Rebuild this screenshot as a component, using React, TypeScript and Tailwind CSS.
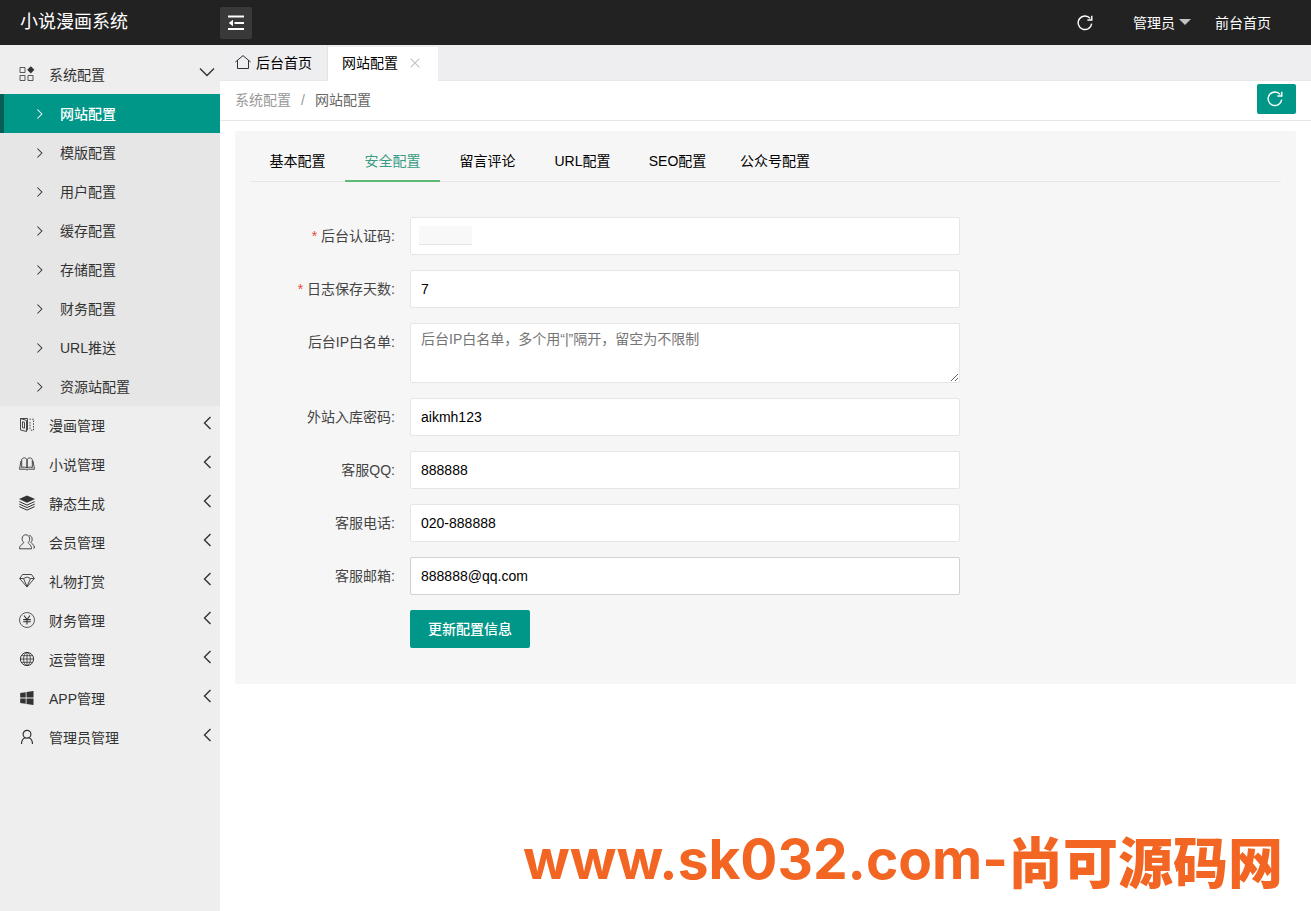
import { useState, type ReactNode } from "react";
import { clsx } from "clsx";

type IconProps = { className?: string };

function Svg({ className, children }: { className?: string; children: ReactNode }) {
  return (
    <svg
      viewBox="0 0 16 16"
      aria-hidden
      fill="none"
      stroke="currentColor"
      strokeWidth="1"
      className={clsx("shrink-0", className ?? "size-4")}
    >
      {children}
    </svg>
  );
}

function RefreshIcon({ className }: IconProps) {
  return (
    <Svg className={className}>
      <path d="M13.200 3.400A6.800 6.800 0 1 0 14.700 8.600" strokeWidth="1.400" />
      <path d="M14.800.8v4.200h-4.400" strokeWidth="1.400" />
    </Svg>
  );
}

function ShrinkIcon() {
  return (
    <Svg>
      <path d="M0 1.500h16M6.500 8H16M0 14h16" strokeWidth="1.800" />
      <path d="M5 4.800v6.400L.8 8z" fill="currentColor" stroke="none" />
    </Svg>
  );
}

function HomeIcon() {
  return (
    <Svg>
      <path d="M.4 7 8 .6 15.600 7M2.500 5.500v8h11v-8" strokeWidth=".8" />
    </Svg>
  );
}

function ChevronIcon({ className, d }: IconProps & { d: string }) {
  return (
    <Svg className={className}>
      <path d={d} strokeWidth="1.400" />
    </Svg>
  );
}

const icons = {
  component: (
    <Svg>
      <path d="M1 1.500h5v5H1zM1 9.500h5v5H1zM9 9.500h5v5H9z" strokeWidth=".8" />
      <path d="M11.800.2 15.400 3.800l-3.600 3.600-3.600-3.600z" fill="currentColor" stroke="none" />
    </Svg>
  ),
  comic: (
    <Svg>
      <path d="M1.500 1.500 7.500 3.500v11l-6-1.500zM1.500 1.500h7v11.500h-1" strokeWidth=".9" />
      <path d="M3.500 4.800l2 .6v5.800l-2-.5z" strokeWidth=".9" />
      <path d="M10.500 2.200h4v11h-4M11 5v7" strokeWidth=".9" strokeDasharray="1.500 1.200" />
    </Svg>
  ),
  book: (
    <Svg>
      <path
        d="M8 3.600v8.400C6.600 10.900 4 10.900 2.700 11.500V3.500C3.600 1.400 7 1.400 8 3.600zM8 3.600v8.400c1.400-1.100 4-1.100 5.300-.5V3.500C12.400 1.400 9 1.400 8 3.600z"
        strokeWidth=".9"
      />
      <path d="M2 5 .5 13.200h6c.5.800 2.500.8 3 0h6L14 5" strokeWidth=".9" />
    </Svg>
  ),
  layers: (
    <Svg>
      <path d="M8 .5 16 4 8 7.700 0 4z" fill="currentColor" stroke="none" />
      <path d="m.3 6.600 7.700 3.500 7.700-3.500M.3 9.100 8 12.600l7.700-3.500M.3 11.600 8 15.100l7.700-3.500" />
    </Svg>
  ),
  users: (
    <Svg>
      <path
        d="M4.800 8.500C2.300 7 2.300.8 6.800.8s4.700 6.200 2.400 7.700c.3 1.700 3.300 2 3.300 6.300H.5c0-4.300 4-4.600 4.300-6.300z"
        strokeWidth=".9"
      />
      <path d="M10.300 1.300c3.500.8 3.400 5.700 1.700 7.200.5 1.300 3.500 2 3.500 5.500h-1.200" strokeWidth=".9" />
    </Svg>
  ),
  diamond: (
    <Svg>
      <path d="M3.500 1.500h9L15.300 5.500 8 14 .7 5.500zM.7 5.500h3.800L8 4l3.500 1.500h3.800M4.500 5.500 8 13.500l3.500-8" strokeWidth=".9" />
    </Svg>
  ),
  yen: (
    <Svg>
      <circle cx="8" cy="8" r="7.500" strokeWidth=".8" />
      <path d="M5 3.500l3 4 3-4M8 7.500v5M4.200 7.600h7.600M4.200 9.800h7.600" strokeWidth="1.100" />
    </Svg>
  ),
  globe: (
    <Svg>
      <circle cx="8" cy="8" r="6.600" />
      <ellipse cx="8" cy="8" rx="3.400" ry="6.600" strokeWidth=".8" />
      <path d="M8 1.400v13.200M1.400 8h13.200M2.500 4.700h11M2.500 11.300h11" strokeWidth=".8" />
    </Svg>
  ),
  windows: (
    <Svg>
      <path
        d="M1.200 3 6.700 2.200v5.400H1.200zM7.500 2.100l7-1v6.500h-7zM1.200 8.400h5.500v5.400L1.200 13zM7.500 8.400h7v6.500l-7-1z"
        fill="currentColor"
        stroke="none"
      />
    </Svg>
  ),
  user: (
    <Svg>
      <circle cx="8" cy="5.300" r="3.900" strokeWidth="1.200" />
      <path d="M2.500 15c0-3.500 1.700-5.600 3.700-6.300M13.500 15c0-3.500-1.700-5.600-3.700-6.300" strokeWidth="1.200" />
    </Svg>
  ),
};

const subMenu = [
  "网站配置",
  "模版配置",
  "用户配置",
  "缓存配置",
  "存储配置",
  "财务配置",
  "URL推送",
  "资源站配置",
];

const menu: { label: string; icon: keyof typeof icons }[] = [
  { label: "漫画管理", icon: "comic" },
  { label: "小说管理", icon: "book" },
  { label: "静态生成", icon: "layers" },
  { label: "会员管理", icon: "users" },
  { label: "礼物打赏", icon: "diamond" },
  { label: "财务管理", icon: "yen" },
  { label: "运营管理", icon: "globe" },
  { label: "APP管理", icon: "windows" },
  { label: "管理员管理", icon: "user" },
];

const configTabs = ["基本配置", "安全配置", "留言评论", "URL配置", "SEO配置", "公众号配置"];

function Header() {
  return (
    <header className="flex h-[45px] items-center bg-[#222] text-white">
      <h1 className="w-[220px] px-5 pb-[2px] text-lg leading-6">小说漫画系统</h1>
      <button
        type="button"
        aria-label="收起菜单"
        className="flex size-8 items-center justify-center rounded-xs bg-[#393939]"
      >
        <ShrinkIcon />
      </button>
      <nav className="ml-auto flex items-center pr-10">
        <button type="button" aria-label="刷新" className="mr-10">
          <RefreshIcon />
        </button>
        <button type="button" className="mr-6 flex items-center gap-1">
          管理员
          <svg viewBox="0 0 12 6" aria-hidden className="mb-[2px] h-[6px] w-3 text-[#c2c2c2]">
            <path d="M0 0h12L6 6z" fill="currentColor" />
          </svg>
        </button>
        <a href="#home">前台首页</a>
      </nav>
    </header>
  );
}

function MenuRow({ label, icon, open }: { label: string; icon: keyof typeof icons; open?: boolean }) {
  return (
    <button type="button" className="flex h-[39px] w-full items-center pr-[5px] pl-[19px] text-left">
      <span className="pb-[2px]">{icons[icon]}</span>
      <span className="ml-[14px] grow">{label}</span>
      <span className="pb-[6px]">
        <ChevronIcon d={open ? "M1 4.500l7 7 7-7" : "M11.500 2 5.500 8l6 6"} />
      </span>
    </button>
  );
}

function Sidebar() {
  const [active, setActive] = useState("网站配置");
  return (
    <aside className="w-[220px] shrink-0 bg-[#eee] pt-[10px] text-[#333]">
      <MenuRow label="系统配置" icon="component" open />
      <ul className="bg-[#e6e6e6]">
        {subMenu.map((label) => (
          <li key={label}>
            <a
              href="#config"
              onClick={() => setActive(label)}
              className={clsx(
                "flex h-[39px] items-center gap-[14px] border-l-4 pl-[30px]",
                label === active
                  ? "border-[#075e55] bg-[#009688] font-medium text-white"
                  : "border-transparent",
              )}
            >
              <ChevronIcon className="size-3" d="M4.500 2l6 6-6 6" />
              {label}
            </a>
          </li>
        ))}
      </ul>
      {menu.map((item) => (
        <MenuRow key={item.label} {...item} />
      ))}
    </aside>
  );
}

function PageTabs() {
  return (
    <div className="flex h-9 items-end border-b border-[#e8e8ea] bg-[#eeeef0] text-black">
      <a href="#home" className="flex h-[35px] items-center gap-[5px] border-r border-[#e2e2e2] px-[15px]">
        <HomeIcon />
        后台首页
      </a>
      <div className="-mb-px flex h-[34px] items-center gap-3 bg-white pr-[18px] pb-[2px] pl-[14px]">
        <a href="#config">网站配置</a>
        <button type="button" aria-label="关闭" className="text-[#c2c2c2]">
          <Svg className="size-[10px]">
            <path d="M1 1l14 14M15 1L1 15" strokeWidth="1.800" />
          </Svg>
        </button>
      </div>
    </div>
  );
}

function Breadcrumb() {
  return (
    <div className="flex h-10 items-start border-b border-[#e6e6e6] px-[15px]">
      <nav className="flex grow leading-[38px] text-[#999]">
        <a href="#system">系统配置</a>
        <span className="w-6 text-center">/</span>
        <span className="text-[#666]">网站配置</span>
      </nav>
      <button
        type="button"
        aria-label="刷新页面"
        className="mt-[3px] flex h-[30px] w-[39px] items-center justify-center rounded-xs bg-[#009688] pr-1 text-white"
      >
        <RefreshIcon />
      </button>
    </div>
  );
}

function Field({
  id,
  label,
  required,
  children,
}: {
  id: string;
  label: string;
  required?: boolean;
  children: ReactNode;
}) {
  return (
    <div className="mb-[15px] flex">
      <label htmlFor={id} className="w-40 shrink-0 px-[15px] text-right leading-[38px] text-[#444]">
        {required && <span className="mr-1 text-[#f0463c]">*</span>}
        {label}:
      </label>
      <div className="relative flex max-w-[550px] grow">{children}</div>
    </div>
  );
}

const inputClass =
  "w-full rounded-xs border bg-white px-[10px] text-black outline-none placeholder:text-[#757575] focus:border-[#d2d2d2]";

function TextInput({ id, value, active }: { id: string; value?: string; active?: boolean }) {
  return (
    <input
      id={id}
      type="text"
      defaultValue={value}
      className={clsx(inputClass, "h-[38px]", active ? "border-[#d2d2d2]" : "border-[#e6e6e6]")}
    />
  );
}

function SecurityForm() {
  return (
    <form className="pt-[35px] pb-[21px]" onSubmit={(e) => e.preventDefault()}>
      <Field id="code" label="后台认证码" required>
        <TextInput id="code" />
        {/* masked value */}
        <span className="absolute top-[9px] left-[9px] h-[19px] w-[53px] border-b border-[#e6e6e6] bg-[#f8f8f8]" />
      </Field>
      <Field id="logDays" label="日志保存天数" required>
        <TextInput id="logDays" value="7" />
      </Field>
      <Field id="ips" label="后台IP白名单">
        <textarea
          id="ips"
          placeholder="后台IP白名单，多个用“|”隔开，留空为不限制"
          className={clsx(inputClass, "h-[60px] resize-y border-[#e6e6e6] py-[5px] leading-5")}
        />
      </Field>
      <Field id="storePass" label="外站入库密码">
        <TextInput id="storePass" value="aikmh123" />
      </Field>
      <Field id="qq" label="客服QQ">
        <TextInput id="qq" value="888888" />
      </Field>
      <Field id="tel" label="客服电话">
        <TextInput id="tel" value="020-888888" />
      </Field>
      <Field id="mail" label="客服邮箱">
        <TextInput id="mail" value="888888@qq.com" active />
      </Field>
      <button
        type="submit"
        className="ml-40 h-[38px] rounded-xs bg-[#009688] px-[18px] font-medium text-white"
      >
        更新配置信息
      </button>
    </form>
  );
}

export default function App() {
  const [tab, setTab] = useState("安全配置");
  return (
    <div className="flex min-h-screen flex-col bg-white font-['Liberation_Sans','Noto_Sans_CJK_SC',sans-serif] text-sm text-[#333]">
      <Header />
      <div className="flex grow">
        <Sidebar />
        <main className="min-w-0 grow">
          <PageTabs />
          <Breadcrumb />
          <section className="mx-[15px] mt-[10px] rounded-xs bg-[#f6f6f6] p-[15px] pt-[10px]">
            <div role="tablist" className="flex border-b border-[#e6e6e6]">
              {configTabs.map((name) => (
                <button
                  key={name}
                  type="button"
                  role="tab"
                  aria-selected={name === tab}
                  onClick={() => setTab(name)}
                  className={clsx(
                    "-mb-px h-[41px] min-w-[95px] border-b-2 px-[15px]",
                    name === tab ? "border-[#5fb878] text-[#3a9c84]" : "border-transparent text-black",
                  )}
                >
                  {name}
                </button>
              ))}
            </div>
            <SecurityForm />
          </section>
        </main>
      </div>
      <div className="pointer-events-none fixed right-7 bottom-4 flex items-center text-[55px] leading-[72px] font-bold whitespace-nowrap text-[#f26522]">
        <span className="font-['Inter',sans-serif]">www.sk032.com-</span>
        <span className="font-['Noto_Sans_CJK_SC',sans-serif] font-black">尚可源码网</span>
      </div>
    </div>
  );
}
